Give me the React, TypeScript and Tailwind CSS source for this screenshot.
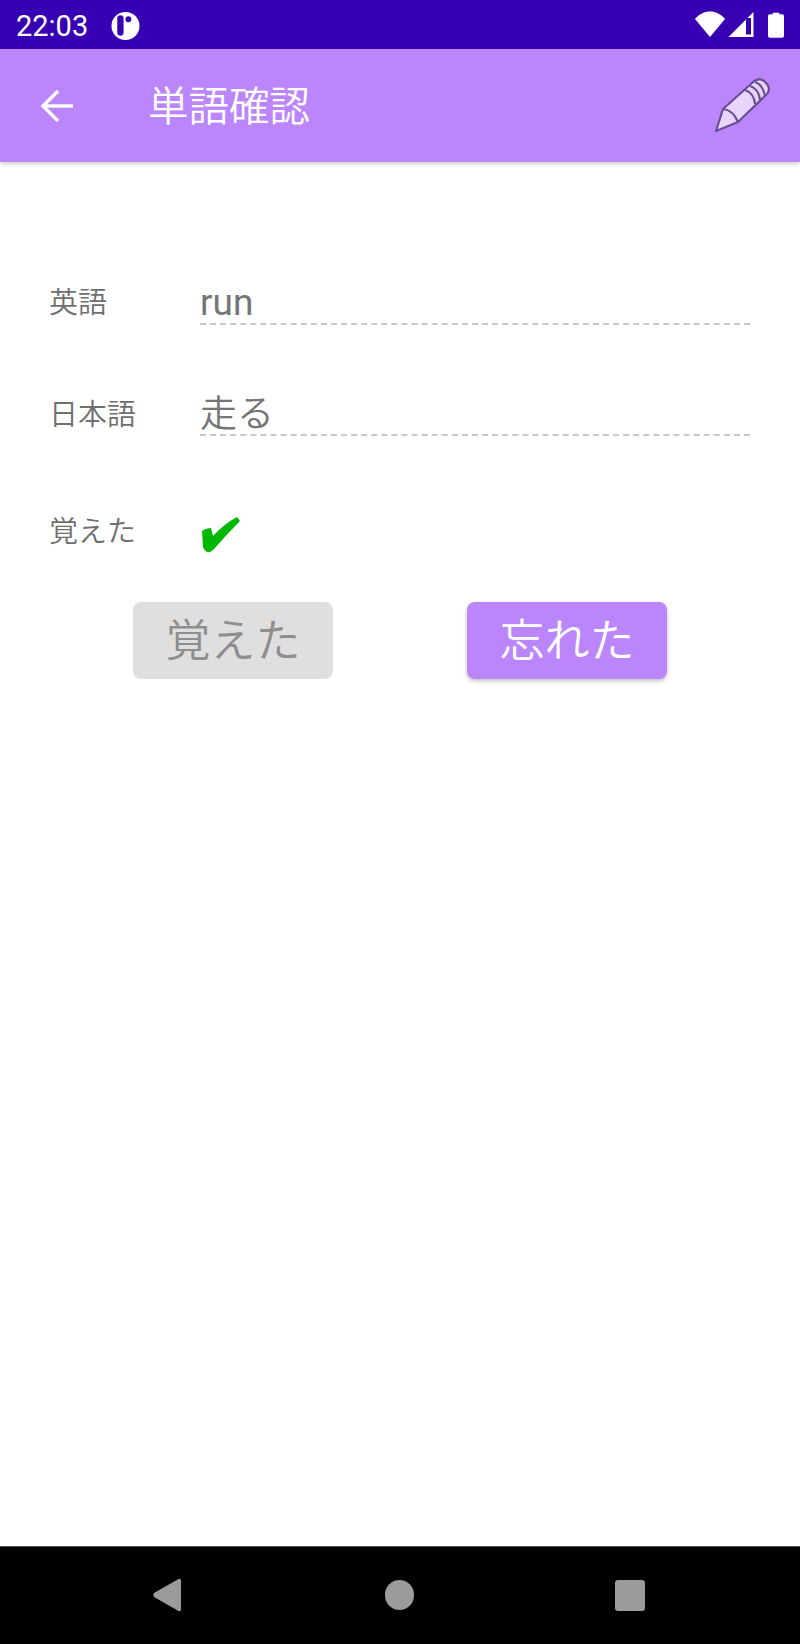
export default function App() {
  return (
    <div className="h-[1644px] w-[800px] flex flex-col bg-white overflow-hidden font-['Roboto','Noto_Sans_CJK_JP',sans-serif]">
      {/* status bar */}
      <div className="h-[49px] bg-[#3700b3] flex items-center pl-[16px] pr-[16px] text-white">
        <span className="text-[29px] leading-[48px] w-[95px] pt-[2px]">22:03</span>
        <svg width="29" height="30" viewBox="0 0 30 30" className="mt-[3px]">
          <circle cx="15" cy="15" r="14.5" fill="#fff" />
          <rect x="6.5" y="4" width="6.5" height="21" rx="3.2" fill="#3700b3" />
          <circle cx="18" cy="8" r="3" fill="#3700b3" />
        </svg>
        <div className="flex-1" />
        <div className="flex items-center">
          <svg width="30" height="27" viewBox="0 0 30 27" className="mr-[3px]">
            <path d="M0 8 C8 -2 22 -2 30 8 L15 26 Z" fill="#fff" />
          </svg>
          <svg width="26" height="25" viewBox="0 0 25 25" className="mr-[14px]">
            <path d="M25 0 V25 H0 Z" fill="#fff" />
            <rect x="17.5" y="6" width="5" height="16.5" fill="#3700b3" />
          </svg>
          <svg width="16" height="26" viewBox="0 0 17 27">
            <path d="M5 2 V0.5 H12 V2 H15 Q17 2 17 4 V25 Q17 27 15 27 H2 Q0 27 0 25 V4 Q0 2 2 2 Z" fill="#fff" />
          </svg>
        </div>
      </div>

      {/* app bar */}
      <div className="h-[113px] bg-[#bb86fc] flex items-center shadow-[0_2px_4px_rgba(0,0,0,0.2)] relative">
        <div className="w-[148px] pl-[40px] flex items-center">
          <svg width="34" height="34" viewBox="0 0 34 34" fill="none" stroke="#fff" strokeWidth="3.4">
            <path d="M33 17 H3" />
            <path d="M18 2 L3 17 L18 32" />
          </svg>
        </div>
        <span className="text-[40.500px] font-[350] leading-none text-white w-[565px] pt-[4px]">単語確認</span>
        <svg width="58" height="58" viewBox="0 0 58 58" className="mt-[-1px]">
          <path d="M3 55 L10 33 L39 7 Q45 1 51 5 L54 8 Q58 13 54 18 L25 46 Z" fill="#e8d5fc" stroke="#6b4f94" strokeWidth="2.2" strokeLinejoin="round" />
          <path d="M10 33 Q20 34 25 46" fill="none" stroke="#6b4f94" strokeWidth="2.2" />
          <path d="M32 14 Q41 17 42 28 M37 10 Q46 13 47 24 M42 6 Q50 9 52 20" fill="none" stroke="#6b4f94" strokeWidth="2.2" />
        </svg>
      </div>

      {/* form */}
      <div className="flex-1 flex flex-col pt-[97px] pl-[49px] pr-[50px]">
        <div className="flex items-start h-[66px]">
          <span className="w-[151px] text-[29px] font-[350] leading-[50px] text-[#6f6f6f] pt-[19px]">英語</span>
          <div className="w-[550px] h-[66px] border-b-2 border-dashed border-[#c8c8c8] text-[37px] leading-[50px] text-[#757575] pt-[19px]">run</div>
        </div>
        <div className="flex items-start h-[66px] mt-[45px]">
          <span className="w-[151px] text-[29px] font-[350] leading-[50px] text-[#6f6f6f] pt-[20px]">日本語</span>
          <div className="w-[550px] h-[66px] border-b-2 border-dashed border-[#c8c8c8] text-[37px] font-[350] leading-[50px] text-[#757575] pt-[20px]">走る</div>
        </div>
        <div className="flex items-center h-[60px] mt-[66px]">
          <span className="w-[153px] text-[29px] font-[350] leading-[50px] text-[#6f6f6f]">覚えた</span>
          <svg width="38" height="36" viewBox="0 0 38 36" className="mt-[6px]">
            <path d="M0 14 Q4 11 9 11 L11 19 Q22 7 35 0 L38 4 Q24 18 13 31 Q9 36 5 35 Q2 33 1 30 Z" fill="#00b800" />
          </svg>
        </div>
        <div className="flex mt-[40px] pl-[84px] gap-[134px]">
          <button className="w-[200px] h-[77px] rounded-[8px] bg-[#dfdfdf] text-[#8e8e8e] text-[45px] font-[350] leading-none pt-[2px]">覚えた</button>
          <button className="w-[200px] h-[77px] rounded-[8px] bg-[#bb86fc] text-white text-[45px] font-[350] leading-none pt-[2px] shadow-[0_2px_4px_rgba(0,0,0,0.25)]">忘れた</button>
        </div>
      </div>

      {/* nav bar */}
      <div className="h-[98px] bg-black border-t border-[#555] flex items-center justify-between pl-[152px] pr-[155px] pb-[1px]">
        <svg width="30" height="34" viewBox="0 0 29 34">
          <path d="M26 1 Q28.500 0 28.500 3 V31 Q28.500 34 26 33 L1.500 19 Q0 17 1.500 15 Z" fill="#9b9b9b" />
        </svg>
        <div className="w-[29px] h-[30px] rounded-full bg-[#9b9b9b] ml-[1px]" />
        <div className="w-[30px] h-[31px] rounded-[3px] bg-[#9b9b9b]" />
      </div>
    </div>
  );
}
